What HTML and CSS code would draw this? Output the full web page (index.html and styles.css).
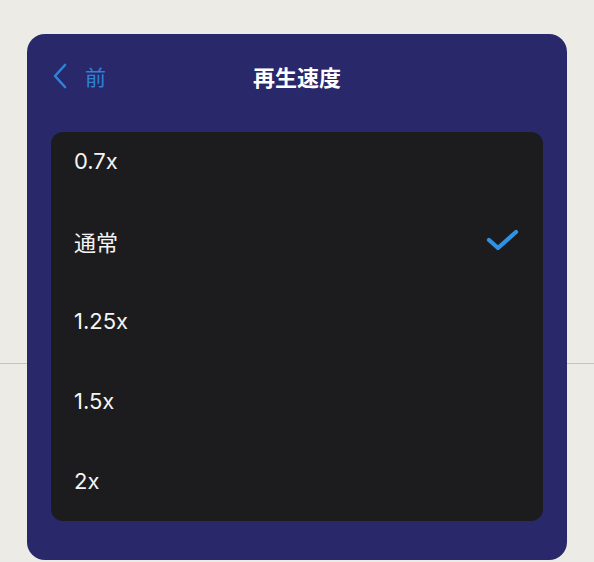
FILE: index.html
```html
<!DOCTYPE html>
<html lang="ja">
<head>
<meta charset="utf-8">
<link rel="stylesheet" href="styles.css">
</head>
<body>
<div class="panel">
  <div class="header">
    <div class="back">
      <svg class="chev" width="18" height="26" viewBox="0 0 18 26"><path d="M14 2 L4 13 L14 24" fill="none" stroke="#2f82d6" stroke-width="2.6" stroke-linecap="round" stroke-linejoin="round"/></svg>
      <span class="back-label">前</span>
    </div>
    <div class="title">再生速度</div>
  </div>
  <div class="list">
    <div class="rows">
      <div class="row"><span>0.7x</span></div>
      <div class="row"><span>通常</span>
        <svg class="check" width="40" height="30" viewBox="0 0 40 30"><path d="M5 14 L14 22 L32 6" fill="none" stroke="#2f92e4" stroke-width="4.2" stroke-linecap="round" stroke-linejoin="round"/></svg>
      </div>
      <div class="row"><span>1.25x</span></div>
      <div class="row"><span>1.5x</span></div>
      <div class="row"><span>2x</span></div>
    </div>
  </div>
</div>
</body>
</html>
```
FILE: styles.css
```css
html, body {
  margin: 0;
  padding: 0;
}
body {
  width: 594px;
  height: 562px;
  overflow: hidden;
  background-color: #edebe6;
  background-image: linear-gradient(to bottom, transparent 363px, #c4c3c0 363px, #c4c3c0 364px, transparent 364px);
  font-family: Inter, "Noto Sans CJK JP", sans-serif;
  padding-top: 34px;
  box-sizing: border-box;
}
.panel {
  margin-left: 27px;
  width: 540px;
  height: 526px;
  background: #28286a;
  border-radius: 18px;
  box-sizing: border-box;
  padding: 0 24px;
}
.header {
  height: 84px;
  margin-bottom: 14px;
  display: flex;
  align-items: center;
  position: relative;
}
.back {
  display: flex;
  align-items: center;
  gap: 16px;
  color: #2f82d6;
  font-size: 21px;
}
.chev {
  display: block;
}
.back-label {
  font-family: "Noto Sans CJK JP", sans-serif;
}
.title {
  position: absolute;
  left: 0;
  right: 0;
  text-align: center;
  color: #ffffff;
  font-size: 22px;
  font-weight: 700;
  font-family: "Noto Sans CJK JP", sans-serif;
  pointer-events: none;
}
.list {
  height: 389px;
  background: #1c1c1e;
  border-radius: 12px;
  overflow: hidden;
}
.rows {
  margin-top: -11px;
}
.row {
  height: 80px;
  display: flex;
  align-items: center;
  justify-content: space-between;
  padding: 0 19px 0 23px;
  color: #f4f4f4;
  font-size: 22px;
}
.row span {
  font-family: Inter, "Noto Sans CJK JP", sans-serif;
}
.check {
  display: block;
}
```
